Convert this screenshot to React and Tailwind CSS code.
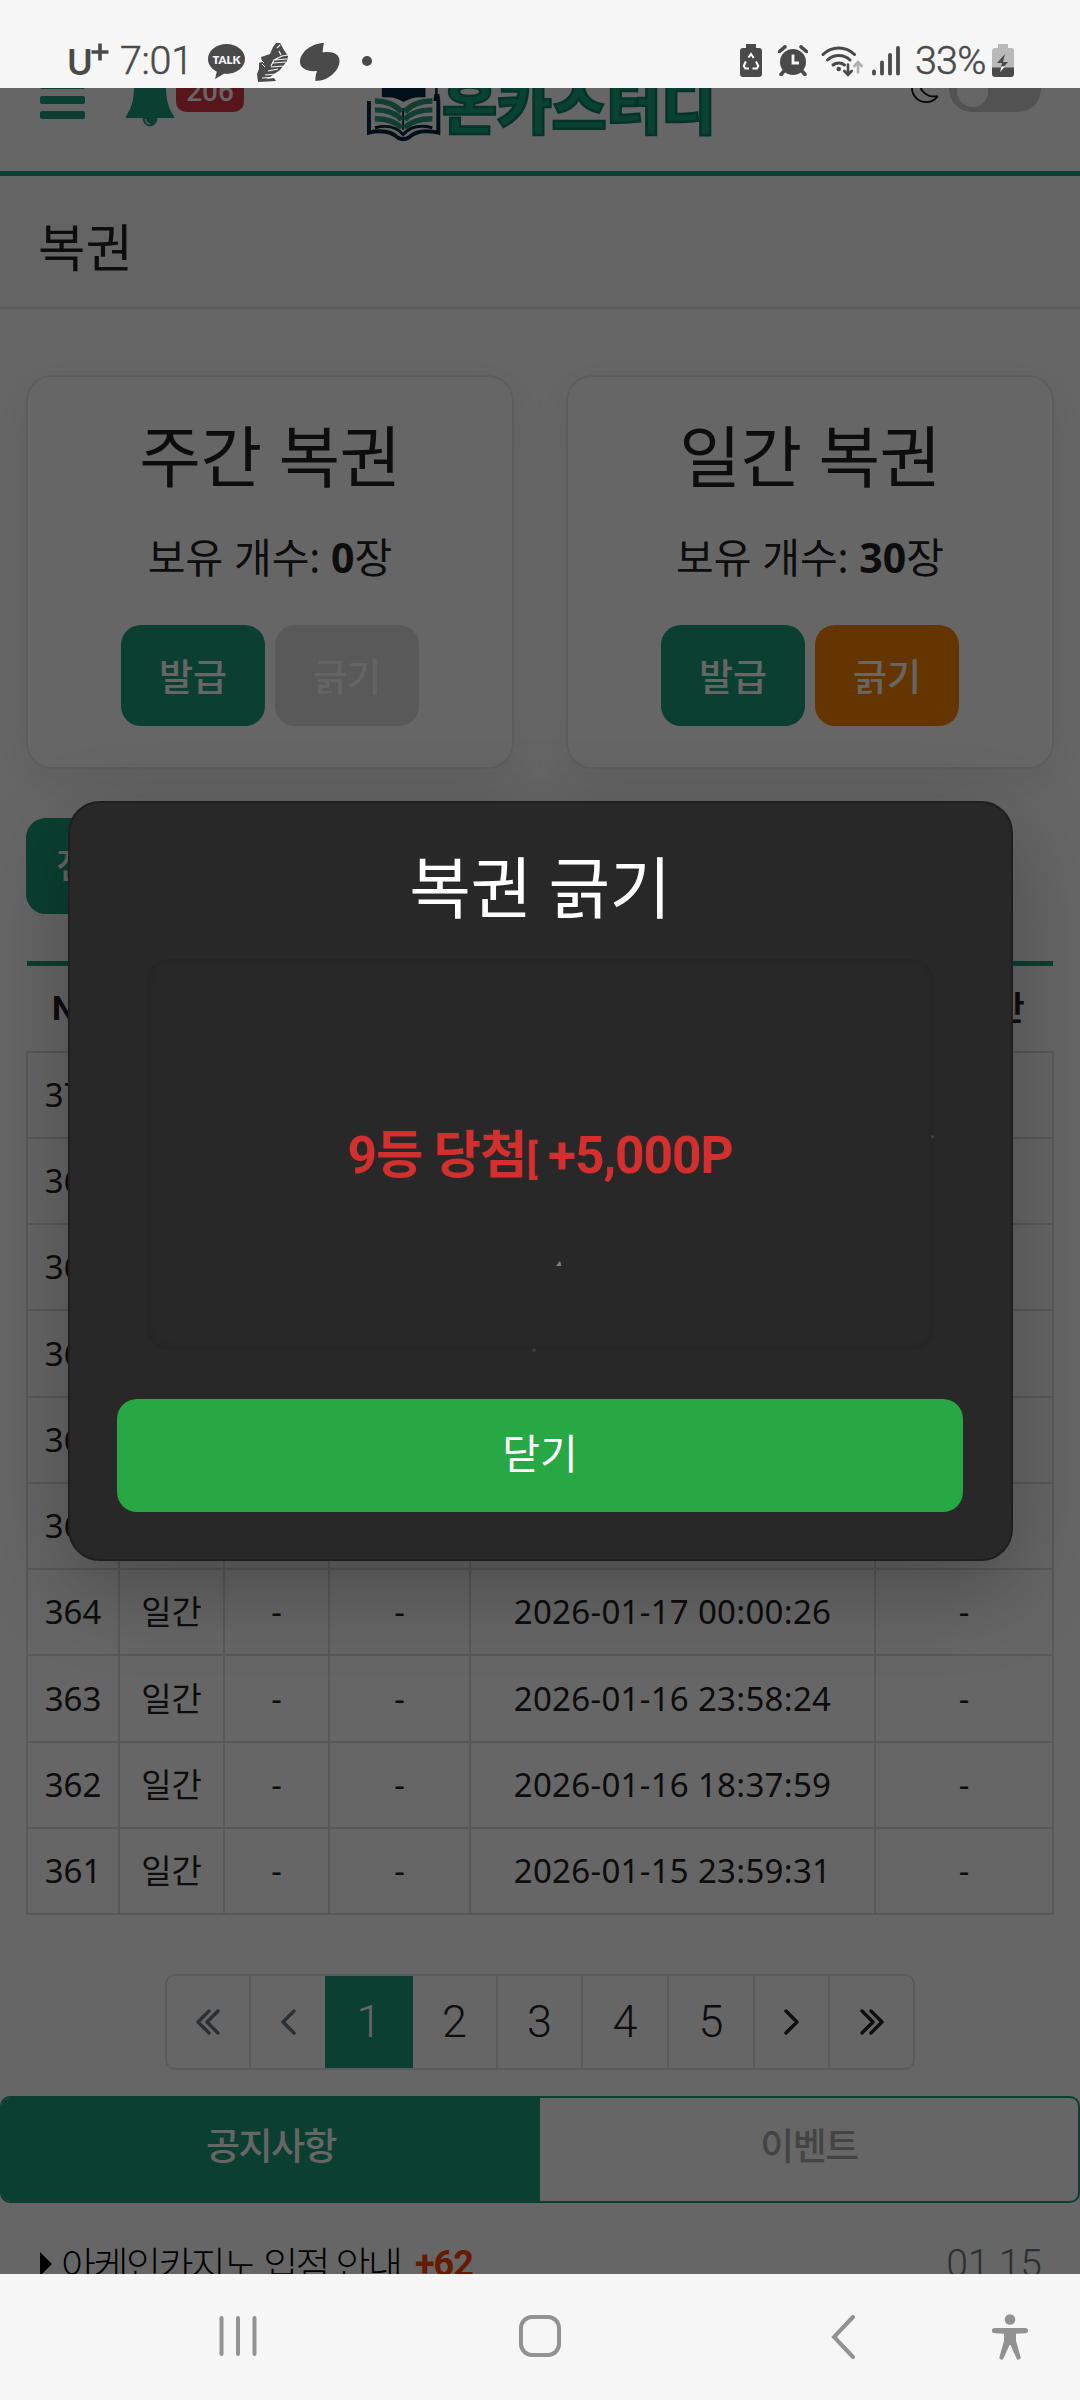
import React from "react";
import { BsMoon } from "react-icons/bs";

const INK = "#4a4a4a";

function StatusBar() {
  return (
    <div className="flex h-[88px] shrink-0 items-start justify-between bg-[#f6f6f6] pl-[67px] pr-[66px] pt-[42px] text-[#4a4a4a]">
      <div className="flex h-[40px] items-start">
        <div className="flex w-[53px] items-start">
          <span className="w-[24px] font-['Inter','Noto_Sans_CJK_KR',sans-serif] text-[35px] font-semibold leading-[41px]">U</span>
          <svg width="18" height="18" viewBox="0 0 18 18" className="mt-[1px]">
            <path d="M9 0.500V17.500M0.500 9H17.500" stroke={INK} strokeWidth="3.600" />
          </svg>
        </div>
        <span className="w-[88px] font-['Roboto','Noto_Sans_CJK_KR',sans-serif] text-[39.500px] font-light leading-[37px] tracking-[-0.300px] [-webkit-text-stroke:0.500px]">7:01</span>
        <svg width="37" height="36" viewBox="0 0 37 36" className="mt-[2px]">
          <path d="M18.500 0C8.300 0 0 6.700 0 15c0 5.400 3.500 10 8.800 12.700L7 35l9-5.200c.8.100 1.600.100 2.500.100C28.700 29.900 37 23.300 37 15S28.700 0 18.500 0z" fill={INK} />
          <text x="18.500" y="20" textAnchor="middle" fontFamily="Lato, sans-serif" fontWeight="800" fontSize="12" textLength="28" lengthAdjust="spacingAndGlyphs" fill="#f6f6f6">TALK</text>
        </svg>
        <svg width="32" height="40" viewBox="0 0 32 40" className="ml-[12px]">
          <path d="M16 5l3-4 4 0 4 7 4 6-1 5-7 9-10 7-4 2 8-1 2 3-18 1-1-8 2-5 0-6 3-1-1-5 9-3z" fill={INK} />
          <path d="M14 24l3-6 8-4 6-1M18 18l12-1M16 21l13-1M14 25l12-1M11 29l10-2M8 33l12-1M5 36l15-1M20 6l3-3M22 9l2 4" stroke="#f6f6f6" strokeWidth="1.200" fill="none" />
          <path d="M4 18l3 3M5 22l3 3" stroke="#f6f6f6" strokeWidth="1" />
        </svg>
        <svg width="40" height="38" viewBox="0 0 40 38" className="ml-[11px] mt-[1px]">
          <path d="M24 0C12 0 0 9 0 19c0 6 7 10 17 9-1 3-2 6-1.500 10C29 38 39.500 27 39.500 18c0-7-7-10-17-8.500C23 7 23 3 24 0z" fill={INK} />
        </svg>
        <span className="ml-[22px] mt-[14px] size-[10px] rounded-full bg-[#4a4a4a]" />
      </div>
      <div className="flex h-[40px] items-start">
        <svg width="22" height="33" viewBox="0 0 22 33" className="mt-[2px]">
          <path d="M6 0h10v4h3a3 3 0 0 1 3 3v23a3 3 0 0 1-3 3H3a3 3 0 0 1-3-3V7a3 3 0 0 1 3-3h3z" fill={INK} />
          <path d="M8.500 13.500l2.500-3.500 2.700 4M5.800 17.500l-2 4.500 1.500 2.500H9M16 17.500l2.300 4.500-1.500 2.500H12.500" stroke="#fff" strokeWidth="2" fill="none" />
        </svg>
        <svg width="30" height="31" viewBox="0 0 30 31" className="ml-[16px] mt-[3px]">
          <circle cx="15" cy="17" r="13" fill={INK} />
          <path d="M1.500 6.500L7 1.800M28.500 6.500L23 1.800M6 26l-3 3.500M24 26l3 3.500" stroke={INK} strokeWidth="3.500" strokeLinecap="round" />
          <path d="M15 9.500V18h6" stroke="#f6f6f6" strokeWidth="2.800" fill="none" />
        </svg>
        <svg width="43" height="33" viewBox="0 0 43 33" className="ml-[13px] mt-[3px]">
          <g fill="none" stroke={INK} strokeWidth="3" strokeLinecap="round">
            <path d="M2 9.500a22.500 22.500 0 0 1 31.500 0" />
            <path d="M6.500 15a16 16 0 0 1 22.500 0" />
            <path d="M12 20a9 9 0 0 1 11.500 0" />
            <path d="M27 19.500v10M23.300 26l3.700 3.800 3.700-3.800" strokeWidth="2.600" />
            <path d="M37 27.500V17.500M33.300 21l3.700-3.800 3.700 3.800" stroke="#b0b0b0" strokeWidth="2.600" />
          </g>
          <circle cx="17.700" cy="24" r="2.300" fill={INK} />
        </svg>
        <svg width="28" height="30" viewBox="0 0 28 30" className="ml-[8px] mt-[4px]">
          <path d="M2 25.500V27.500M10 16.500V27.500M18 9V27.500M26 2V27.500" stroke={INK} strokeWidth="3.800" strokeLinecap="round" />
        </svg>
        <span className="ml-[15px] w-[77px] whitespace-nowrap font-['Roboto','Noto_Sans_CJK_KR',sans-serif] text-[39.500px] font-light leading-[37px] tracking-[-0.800px] [-webkit-text-stroke:0.500px]">33%</span>
        <svg width="22" height="33" viewBox="0 0 22 33" className="mt-[2px]">
          <path d="M6 0h10v4h3a3 3 0 0 1 3 3v17H0V7a3 3 0 0 1 3-3h3z" fill="#b9b9b9" />
          <path d="M0 23.500h22V30a3 3 0 0 1-3 3H3a3 3 0 0 1-3-3z" fill={INK} />
          <path d="M13 10L5 19h5l-2 8 8-9h-5z" fill={INK} />
          <path d="M9.500 22.500L8 28l5-5.500z" fill="#fff" />
        </svg>
      </div>
    </div>
  );
}

function BookLogo() {
  return (
    <svg width="76" height="85" viewBox="0 0 76 85">
      <path d="M0 20L38 4l38 16-16 8v14c-8-2-15 0-22 4-7-4-14-6-22-4V28z" fill="#04263d" />
      <path d="M71 22v18" stroke="#04263d" strokeWidth="2.500" />
      <path d="M69 38h5l1 7h-7z" fill="#04263d" />
      <path d="M9 41c10-1 20 3 28.500 10C46 44 57 40 67 41v33c-9-2-18 1-23 5h-13c-5-4-13-7-22-5z" fill="#fff" />
      <path d="M3 45v32c12-3 23-1 29 5 3 2 8 2 11 0 6-6 17-8 30-5V45" fill="none" stroke="#04263d" strokeWidth="4" />
      <path d="M9 72c12-3 22-1 28.500 7C44 71 55 69 67 72" fill="none" stroke="#04263d" strokeWidth="3" />
      <path d="M37.500 52v22" stroke="#04263d" strokeWidth="2" />
      <g fill="none" stroke="#2f9a7d" strokeWidth="5.500">
        <path d="M9 45c10 0 20 3 27 11M9 54c10 0 20 2 27 10M9 63c10 0 20 2 27 9" />
        <path d="M67 45c-10 0-21 3-28 11M67 54c-10 0-21 2-28 10M67 63c-10 0-21 2-28 9" />
      </g>
    </svg>
  );
}

function Header() {
  return (
    <header className="-mt-[32px] flex h-[120px] shrink-0 items-start border-b-[5px] border-[#1b9d7a] bg-white pl-[40px] pr-[39px]">
      <div className="mt-[25px] flex w-[45px] flex-col gap-[7px]">
        <span className="h-[8px] rounded-[2px] bg-[#1b9d7a]" />
        <span className="h-[8px] rounded-[2px] bg-[#1b9d7a]" />
        <span className="h-[8px] rounded-[2px] bg-[#1b9d7a]" />
      </div>
      <svg width="48" height="68" viewBox="0 0 48 68" className="ml-[41px] mt-[4px]">
        <path d="M24 2c3 0 4 2 4 5 9 2 12 9 12 20 0 14 3 22 8 29v2H0v-2c5-7 8-15 8-29C8 16 11 9 20 7c0-3 1-5 4-5z" fill="#1b9d7a" />
        <path d="M16.500 58h15a7.500 8.500 0 0 1-15 0z" fill="#1b9d7a" />
        <path d="M19.500 59a5 5.500 0 0 0 4.500 5" stroke="#fff" strokeWidth="1.200" fill="none" />
      </svg>
      <span className="ml-[2px] mt-[12px] flex h-[44px] w-[68px] items-center justify-center rounded-[10px] bg-[#dc3545] pt-[3px] font-['Roboto','Noto_Sans_CJK_KR',sans-serif] text-[28px] font-medium leading-[41px] text-white">206</span>
      <div className="ml-[122px] flex w-[350px] items-start">
        <BookLogo />
        <span className="ml-[1px] mt-[11px] whitespace-nowrap font-['Noto_Sans_CJK_KR',sans-serif] text-[59.500px] font-black leading-[72px] text-[#17a67f] [-webkit-text-stroke:2.500px_#0f8061]">온카스터디</span>
      </div>
      <BsMoon className="ml-auto mt-[18px] size-[29px] text-[#111]" />
      <div className="ml-[9px] mt-[10px] flex h-[46px] w-[92px] items-center rounded-full bg-[#ccc] pl-[8px]">
        <span className="mt-[4px] size-[31px] rounded-full bg-white" />
      </div>
    </header>
  );
}

function TicketCard({ title, count, active }) {
  return (
    <section className="flex h-[394px] flex-1 flex-col items-center rounded-[26px] border-2 border-[#e8e8e8] bg-white pt-[39px] shadow-[0_12px_40px_rgba(0,0,0,0.08)]">
      <h2 className="text-[67px] leading-[80px] tracking-[-0.500px]">{title}</h2>
      <p className="mt-[31px] text-[41px] leading-[60px]">
        보유 개수: <b className="font-bold">{count}</b>장
      </p>
      <div className="mt-[38px] flex gap-[10px] *:pt-[2px]">
        <button className="h-[101px] w-[144px] rounded-[20px] bg-[#1b9d7a] text-[37px] font-medium text-white">발급</button>
        {active ? (
          <button className="h-[101px] w-[144px] rounded-[20px] bg-[#fd8500] text-[37px] font-medium text-white">긁기</button>
        ) : (
          <button className="h-[101px] w-[144px] rounded-[20px] bg-[#dedede] text-[37px] font-medium text-[#fafafa]">긁기</button>
        )}
      </div>
    </section>
  );
}

const rows = [
  ["370", "2026-01-20 00:00:12"],
  ["369", "2026-01-19 23:59:08"],
  ["368", "2026-01-19 00:00:21"],
  ["367", "2026-01-18 23:58:47"],
  ["366", "2026-01-18 00:00:15"],
  ["365", "2026-01-17 23:59:02"],
  ["364", "2026-01-17 00:00:26"],
  ["363", "2026-01-16 23:58:24"],
  ["362", "2026-01-16 18:37:59"],
  ["361", "2026-01-15 23:59:31"],
];

function HistoryTable() {
  return (
    <div className="mx-[26px] mt-[47px] shrink-0 text-[33px]">
      <div className="mx-px grid h-[90px] grid-cols-[92px_105px_105px_141px_405px_178px] items-center border-t-[5px] border-[#1b9d7a] text-center font-['Roboto','Noto_Sans_CJK_KR',sans-serif] font-bold">
        {["No", "구분", "등수", "당첨금", "발급시간", "사용시간"].map((h) => (
          <span key={h}>{h}</span>
        ))}
      </div>
      <div className="border-l-2 border-t-2 border-[#dcdcdc]">
        {rows.map(([no, time], i) => (
          <div
            key={no}
            className={
              (i === 3 || i === 7 ? "h-[87px]" : "h-[86px]") +
              " grid grid-cols-[92px_105px_105px_141px_405px_178px] text-center *:flex *:items-center *:justify-center *:border-b-2 *:border-r-2 *:border-[#dcdcdc]"
            }
          >
            <span>{no}</span>
            <span>일간</span>
            <span>-</span>
            <span>-</span>
            <span className="tracking-[0.300px]">{time}</span>
            <span>-</span>
          </div>
        ))}
      </div>
    </div>
  );
}

function Chevrons({ d }) {
  return (
    <svg width="24" height="26" viewBox="0 0 24 26" fill="none" stroke="currentColor" strokeWidth="3.400" strokeLinecap="round" strokeLinejoin="round">
      <path d={d} />
    </svg>
  );
}

function Pagination() {
  return (
    <nav className="mx-auto mt-[59px] flex h-[96px] w-[750px] shrink-0 overflow-hidden rounded-[10px] border-2 border-[#e2e2e2] font-['Roboto','Noto_Sans_CJK_KR',sans-serif] text-[45px] font-light *:flex *:items-center *:justify-center *:border-[#e2e2e2]">
      <span className="w-[84px] border-r-2 text-[#6c757d]"><Chevrons d="M13 2L2 13l11 11M22 2L11 13l11 11" /></span>
      <span className="w-[74px] text-[#6c757d]"><Chevrons d="M18 2L7 13l11 11" /></span>
      <span className="-my-[2px] w-[88px] bg-[#1b9d7a] text-white">1</span>
      <span className="w-[85px] border-r-2">2</span>
      <span className="w-[85px] border-r-2">3</span>
      <span className="w-[86px] border-r-2">4</span>
      <span className="w-[86px] border-r-2">5</span>
      <span className="w-[75px] border-r-2"><Chevrons d="M6 2l11 11L6 24" /></span>
      <span className="flex-1"><Chevrons d="M2 2l11 11L2 24M11 2l11 11-11 11" /></span>
    </nav>
  );
}

function Board() {
  return (
    <>
      <div className="mt-[26px] flex h-[107px] shrink-0 overflow-hidden rounded-[10px] border-2 border-[#1b9d7a] text-[37px] font-medium tracking-[-1.600px]">
        <span className="flex flex-1 items-center justify-center bg-[#1b9d7a] pb-[8px] text-white">공지사항</span>
        <span className="flex flex-1 items-center justify-center pb-[8px] text-[#aaa]">이벤트</span>
      </div>
      <div className="mt-[31px] flex h-[60px] shrink-0 items-center pl-[40px] pr-[38px] text-[38px] text-black">
        <svg width="12" height="24" viewBox="0 0 12 24"><path d="M0 0l12 12L0 24z" /></svg>
        <span className="ml-[9px] w-[340px] whitespace-nowrap text-[38px] font-light tracking-[-2.500px]">아케인카지노 입점 안내</span>
        <b className="ml-[14px] font-['Roboto','Noto_Sans_CJK_KR',sans-serif] text-[36px] font-bold tracking-[-1px] text-[#ff4500]">+62</b>
        <span className="ml-auto font-['Roboto','Noto_Sans_CJK_KR',sans-serif] text-[39px] font-light text-[#6c757d]">01.15</span>
      </div>
    </>
  );
}

function ScratchDialog() {
  return (
    <div className="absolute inset-0 bg-black/60">
      <div role="dialog" className="mx-auto mt-[713px] flex h-[760px] w-[945px] flex-col items-center rounded-[32px] border-2 border-[#1f1f1f] bg-[#282828] pt-[44px] text-white shadow-[0_28px_84px_rgba(0,0,0,0.27)]">
        <h3 className="text-[67px] leading-[80px] tracking-[-0.500px]">복권 긁기</h3>
        <div className="relative mt-[32px] flex h-[391px] w-[787px] items-center justify-center rounded-[22px] pt-[7px] shadow-[inset_0_0_10px_rgba(0,0,0,0.12)]">
          <span className="whitespace-nowrap font-['Roboto','Noto_Sans_CJK_KR',sans-serif] text-[51.500px] font-bold leading-[60px] tracking-[-1.100px] text-[#d32f2f]">
            9등 당첨<span className="text-[40px]">[</span> +5,000P
          </span>
          <svg width="7" height="7" viewBox="0 0 7 7" className="absolute left-[408px] top-[301px]"><path d="M1 6L5 1l1.500 5z" fill="#808080" /></svg>
          <span className="absolute left-[784px] top-[176px] size-[3px] rounded-full bg-[#444]" />
          <span className="absolute left-[385px] top-[389px] size-[4px] rounded-full bg-[#3a3a3a]" />
        </div>
        <button className="mt-[49px] h-[113px] w-[846px] rounded-[20px] bg-[#28a745] pb-[4px] text-[41px]">닫기</button>
      </div>
    </div>
  );
}

function NavigationBar() {
  return (
    <div className="flex h-[126px] shrink-0 items-start bg-[#f6f6f6] pl-[219px] pt-[41px]">
      <svg width="38" height="42" viewBox="0 0 38 42"><path d="M2.500 3v36M19 3v36M35.500 3v36" stroke="#929292" strokeWidth="4" strokeLinecap="round" /></svg>
      <span className="ml-[262px] size-[42px] rounded-[13px] border-4 border-[#929292]" />
      <svg width="25" height="44" viewBox="0 0 25 44" className="ml-[270px]" fill="none" stroke="#929292" strokeWidth="4"><path d="M22 2L3 22l19 20" strokeLinecap="round" /></svg>
      <svg width="36" height="46" viewBox="0 0 36 46" className="ml-[136px] -mt-px" fill="#929292">
        <circle cx="18" cy="5.500" r="5.300" />
        <path d="M2.500 14h31a2.500 2.500 0 0 1 0 5.200l-9.500.500v7l4.500 16a2.200 2.200 0 0 1-4.200 1.400L18.500 31h-1l-5.800 13.100a2.200 2.200 0 0 1-4.200-1.400L12 26.700v-7l-9.500-.500a2.500 2.500 0 0 1 0-5.200z" />
      </svg>
    </div>
  );
}

export default function App() {
  return (
    <div className="flex h-[2400px] w-[1080px] flex-col overflow-hidden font-['Noto_Sans','Noto_Sans_CJK_KR',sans-serif] text-[#222]" lang="ko">
      <StatusBar />
      <main className="relative flex h-[2186px] shrink-0 flex-col overflow-hidden bg-white">
        <Header />
        <div className="h-[133px] shrink-0 border-b-2 border-[#e4e4e4] bg-[#fafafa] pl-[38px] pt-[36px]">
          <h1 className="text-[51.500px] leading-[70px]">복권</h1>
        </div>
        <div className="mt-[66px] flex shrink-0 gap-[52px] px-[26px]">
          <TicketCard title="주간 복권" count="0" />
          <TicketCard title="일간 복권" count="30" active />
        </div>
        <button className="ml-[26px] mt-[49px] h-[96px] w-[126px] shrink-0 rounded-[20px] bg-[#1b9d7a] text-[36px] font-medium text-white">전체</button>
        <HistoryTable />
        <Pagination />
        <Board />
        <ScratchDialog />
      </main>
      <NavigationBar />
    </div>
  );
}
